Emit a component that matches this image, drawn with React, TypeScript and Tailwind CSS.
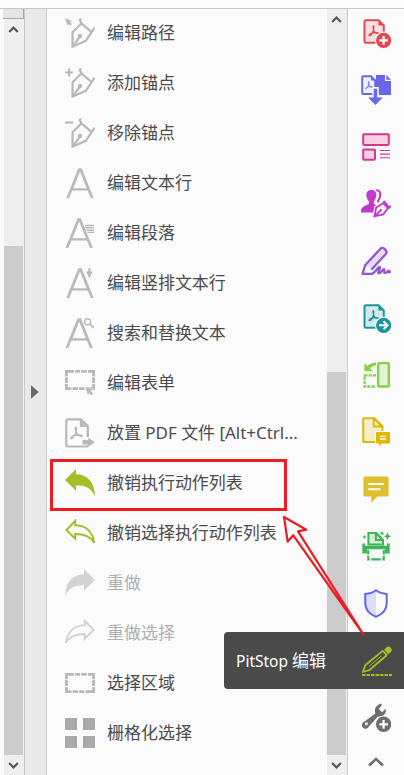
import type { ReactNode } from "react";

function Icon({ children, className = "" }: { children: ReactNode; className?: string }) {
  return (
    <svg viewBox="0 0 30 30" fill="none" className={`block h-[30px] w-[30px] shrink-0 ${className}`}>
      {children}
    </svg>
  );
}

const GRAY = "#b9b9b9";
const GREEN = "#a8bd25";

const Nib = () => (
  <g stroke={GRAY} strokeWidth="2.2">
    <path d="M16.3 5.4 7.6 14.3V28.6L20.8 22.8 26.6 14.2M15.8.3 14.9 2.3 16.4 5.3 26.6 14 29.6 9.6" />
    <path d="M7.6 28.6 15 18.5" />
    <circle cx="15" cy="18" r="1.1" fill={GRAY} />
  </g>
);

const LetterA = ({ dx = 0 }: { dx?: number }) => (
  <path
    d={`M${1.3 + dx} 29.9 ${13.4 + dx} .2H${16.6 + dx}L${28.7 + dx} 29.9H${25.9 + dx}L${22.6 + dx} 22.4H${7.3 + dx}L${4.1 + dx} 29.9ZM${8.3 + dx} 20.2H${21.7 + dx}L${15 + dx} 3.6Z`}
    fill={GRAY}
    fillRule="evenodd"
  />
);

const Acrobat = ({ c, x = 0, y = 0, s = 1 }: { c: string; x?: number; y?: number; s?: number }) => (
  <path
    transform={`translate(${x} ${y}) scale(${s})`}
    d="M5.3.3C6.1.3 6.2 2.8 5.5 5 4.6 7.8 2.6 10.9 1.3 10.6.5 10.2 1.5 8.8 3.8 8 6.5 7.2 10.6 7.2 11 8.1 11.1 8.9 9.1 8.9 7.2 7.2 5.3 5.4 4.7.8 5.3.3Z"
    stroke={c}
    strokeWidth="1.2"
  />
);

const Marquee = ({ y }: { y: number }) => (
  <g stroke={GRAY} strokeWidth="2.8">
    <path d={`M0 ${y + 1.4}H9M10.2 ${y + 1.4}H15M16.2 ${y + 1.4}H22M23 ${y + 1.4}H30M0 ${y + 18.6}H6.5M7.5 ${y + 18.6}H13M14 ${y + 18.6}H19.5M20.7 ${y + 18.6}H30`} />
    <path d={`M1.4 ${y}V${y + 6.3}M1.4 ${y + 7.2}V${y + 13}M1.4 ${y + 14}V${y + 20}M28.6 ${y}V${y + 6.3}M28.6 ${y + 7.2}V${y + 13}M28.6 ${y + 14}V${y + 20}`} />
  </g>
);

const UNDO = "M0 12 11 1V6.3C22 6.3 30 14 30 28.7 26.5 20 20.5 17.2 11 17.2V22.8Z";
const UNDO_LINE = "M1.4 12 10.2 3V7.3C20.5 7.3 27.5 13.5 29.2 24.8 25.5 18.5 20 16.1 10.2 16.1V20.6Z";

const rows: { label: string; off?: boolean; icon: ReactNode }[] = [
  { label: "编辑路径", icon: <><Nib /><path d="M0 .2 7 3 5.2 4.2 7 6.1 5.4 7.8 3.7 6 2.7 7.7Z" fill={GRAY} /></> },
  { label: "添加锚点", icon: <><Nib /><path d="M.2 4.5H8M4.1.6V8.4" stroke={GRAY} strokeWidth="2.2" /></> },
  { label: "移除锚点", icon: <><Nib /><path d="M0 4.5H8.3" stroke={GRAY} strokeWidth="2.2" /></> },
  { label: "编辑文本行", icon: <LetterA /> },
  { label: "编辑段落", icon: <><LetterA dx={-0.8} /><path d="M20 7.5H29M20.5 9.7H29M21.5 12.3H29M22.5 14.4H29" stroke={GRAY} strokeWidth="1.4" /></> },
  { label: "编辑竖排文本行", icon: <><LetterA /><path d="M23.2.3H25.5V3.5H27.7L24.4 10.5 21.1 3.5H23.2Z" fill={GRAY} /></> },
  { label: "搜索和替换文本", icon: <><LetterA dx={-0.8} /><circle cx="22.5" cy="3.8" r="3.1" fill="#fbfbfb" stroke={GRAY} strokeWidth="1.4" /><path d="M24.8 6 28.7 9.8" stroke={GRAY} strokeWidth="1.8" /></> },
  { label: "编辑表单", icon: <><Marquee y={2} /><path d="M20 18.5 28.5 21.3 26.2 22.9 28.3 25.8 26 27.7 24.2 25.2 22.8 27.2Z" fill={GRAY} stroke="#fbfbfb" strokeWidth=".5" /></> },
  { label: "放置 PDF 文件 [Alt+Ctrl...", icon: <><path d="M1.3 3Q1.3 1.3 3 1.3H16L22.8 8V19M22.8 27Q22.8 28.5 21 28.5H3Q1.3 28.5 1.3 27V3M16 1.5V8H22.5" stroke={GRAY} strokeWidth="2.2" /><path d="M16 2V8H22Z" fill={GRAY} /><Acrobat c={GRAY} x={4.5} y={8.5} s={1.15} /><path d="M17.5 22.1H23.2V19.8L30 24.3 23.2 28.8V26.5H17.5Z" fill={GRAY} /></> },
  { label: "撤销执行动作列表", icon: <path d={UNDO} fill={GREEN} /> },
  { label: "撤销选择执行动作列表", icon: <path d={UNDO_LINE} stroke={GREEN} strokeWidth="2" /> },
  { label: "重做", off: true, icon: <path transform="matrix(-1 0 0 1 30 0)" d={UNDO} fill="#d3d3d3" /> },
  { label: "重做选择", off: true, icon: <path transform="matrix(-1 0 0 1 30 0)" d={UNDO_LINE} stroke="#d3d3d3" strokeWidth="2" /> },
  { label: "选择区域", icon: <Marquee y={5} /> },
  { label: "栅格化选择", icon: <path d="M0 0H12V12H0ZM18 0H30V12H18ZM0 18H12V30H0ZM18 18H30V30H18Z" fill="#aaaaaa" /> },
];

const PdfPage = ({ c, tint }: { c: string; tint: string }) => (
  <>
    <path d="M4.8 2.3H17.6L22.8 7.4V23.5Q22.8 24.8 21.5 24.8H4.8Q3.5 24.8 3.5 23.5V3.6Q3.5 2.3 4.8 2.3Z" fill={tint} stroke={c} strokeWidth="2" />
    <path d="M17.5 2V7.5H23Z" fill={c} />
    <Acrobat c={c} x={7} y={7.3} s={0.98} />
    <circle cx="22.6" cy="22.3" r="8.7" fill="#fbfbfb" />
    <circle cx="22.6" cy="22.3" r="7.6" fill={c} />
  </>
);

const tools: ReactNode[] = [
  <><PdfPage c="#e34850" tint="#f9dfe1" /><path d="M18.3 22.3H27M22.6 18V26.7" stroke="#fff" strokeWidth="2.2" /></>,
  <><path d="M15 0H24V6H30V20H15ZM25.3 0 30 4.7H25.3Z" fill="#6767ec" /><path d="M2.4 1.2H10L14.2 5.3V19H2.4Q1.2 19 1.2 17.8V2.4Q1.2 1.2 2.4 1.2Z" fill="#f0f0fc" stroke="#6767ec" strokeWidth="1.9" /><path d="M10 1V5.5H14.5Z" fill="#6767ec" /><Acrobat c="#6767ec" x={3.7} y={6.2} s={0.72} /><path d="M11.3 12H17.8V21H23L14.5 30.5 5.8 21H11.3Z" fill="#fbfbfb" /><path d="M12.7 13.7H16.2V22.4H21.8L14.4 30 7 22.4H12.7Z" fill="#6767ec" /></>,
  <><rect x="2.2" y="2.2" width="25.6" height="10.7" rx=".8" fill="#f5d1e5" stroke="#d83790" strokeWidth="2" /><rect x="2.2" y="17.4" width="11.8" height="10.4" rx=".8" fill="#f5d1e5" stroke="#d83790" strokeWidth="2" /><path d="M19 18.5H29M19 22.1H29M19 25.7H29" stroke="#d83790" strokeWidth="1.1" /></>,
  <><path d="M10.4.9C14 .9 15.7 3.3 15.3 6.6 15.1 9 14 10.9 12.9 12.2V15L16.6 16.5 13 21.5V23.4H0C.1 18.8 1.5 17.6 7.9 15V12.2C6 10 5.3 8 5.3 5.7 5.3 2.7 7.3.9 10.4.9Z" fill="#c038cc" /><path d="M15.1 1.3C18.8 1 20 4 18.9 8.2 18.3 10 17.2 11 17.2 12V13.5" stroke="#c038cc" strokeWidth="2" /><path d="M13.4 27.4 15.2 18.6 22.2 14.2 27 19 22.2 25.5Z" fill="#fbfbfb" stroke="#fbfbfb" strokeWidth="4" /><path d="M13.4 27.4 15.2 18.6 22.2 14.2 27 19 22.2 25.5ZM22.2 14.2 23.4 11.8M23 12 28.4 18.7 30 16.8M14 27 20.3 20.6" fill="#fbfbfb" stroke="#c038cc" strokeWidth="1.8" /><circle cx="20" cy="21" r="1" fill="#c038cc" /></>,
  <><path d="M1.5 27.6 4.3 19 19.4 2.7Q21.4.9 23.8 3.1 26.7 5.8 24.8 8L10.4 23.4Z" fill="#e7dcf5" /><path d="M1.5 27.6 4.3 19 10.4 23.7Z" fill="#fbfbfb" /><path d="M10.4 23.7 24.8 8Q26.7 5.8 23.8 3.1 21.4.9 19.4 2.7L4.3 19 1.5 27.8H10.3C14.2 27.8 16.6 20.7 18.6 20.9 20.5 21.4 15.6 27.6 18 27.4 20.3 27.4 21.5 22.9 23 23.2 24.3 23.6 21.8 27.2 24.3 26.9 26.6 26.7 26.7 24.5 27.6 24.8 27.4 27.2 29 26.8 29.7 24.6" stroke="#9256d9" strokeWidth="2.3" strokeLinejoin="round" /></>,
  <><PdfPage c="#1b959a" tint="#d1e9e9" /><path d="M18 22.3H26M22.5 18.3 26.6 22.3 22.5 26.3" stroke="#fff" strokeWidth="2" /></>,
  <><rect x="17.2" y="3.2" width="10.6" height="23.3" rx=".8" fill="#e5f3d9" stroke="#85d044" strokeWidth="2.3" /><path d="M15 15.3H3.6V26.5H15" stroke="#85d044" strokeWidth="2.3" strokeDasharray="3.2 1" /><path d="M3.4 3.2V11.2H12L9.1 8.3Q11.5 5.6 15 5.2V2.6Q10 2.8 6.4 6.1Z" fill="#85d044" /></>,
  <><path d="M3 1.2H13.2L21.4 9.3V24.9H3Q2.2 24.9 2.2 24V2Q2.2 1.2 3 1.2Z" fill="#f5eece" stroke="#ddb900" strokeWidth="2" /><path d="M12.7 1.5V9.6H21.3M12.5.7 22 10.2" stroke="#ddb900" strokeWidth="2" /><path d="M14 14H29V28H14Z" fill="#fbfbfb" /><path d="M16 15H28Q29 15 29 16V25.5Q29 26.4 28 26.4H21L18.2 29.6V26.4H16Q15 26.4 15 25.5V16Q15 15 16 15Z" fill="#ddb900" /><path d="M19 19.4H25M19 22H25" stroke="#fff" strokeWidth="1.3" /></>,
  <><path d="M4 2.5H26Q27.6 2.5 27.6 4.1V21Q27.6 22.6 26 22.6H16.5L10.3 28.8V22.6H4Q2.4 22.6 2.4 21V4.1Q2.4 2.5 4 2.5Z" fill="#e0bf2c" /><path d="M7.3 10H22.7M7.3 15.2H19.5" stroke="#fff" strokeWidth="2" /></>,
  <><path d="M7.4 13.5V2H15L22 9V13.5Z" fill="#d7ecdb" stroke="#3fb458" strokeWidth="2" /><path d="M14.8 1V9H23M14 1.2 22.5 9.5" stroke="#3fb458" strokeWidth="2" /><path d="M1.3 12.5H4V14.8H26V12.5H28.7V22.5H23.8V18.3H6.2V22.5H1.3Z" fill="#3fb458" /><path d="M6.2 19H23.8V29.5H6.2Z" fill="#fbfbfb" /><path d="M7.2 19V23.5M22.8 19V23.5M7.2 24.7V27.6M22.8 24.7V27.6" stroke="#3fb458" strokeWidth="2" /><path d="M6.2 28.4H8.8M10.2 28.4H19.8M21.2 28.4H23.8" stroke="#3fb458" strokeWidth="2.4" /><path d="M26.5 1 27.5 4.1 30 5.3 27.5 6.5 26.5 9 25.4 6.5 23 5.3 25.4 4.1ZM21 0 21.8 1.5 23.5 2.2 21.8 2.9 21 4.5 20.2 2.9 18.5 2.2 20.2 1.5ZM3.5 4 4.2 5.3 5.5 6 4.2 6.7 3.5 8 2.8 6.7 1.5 6 2.8 5.3Z" fill="#3fb458" /></>,
  <><path d="M15 2.3V28.8C7 25 4.2 21.2 4.2 15V5.9Q10.5 5.7 15 2.3Z" fill="#dddcf8" /><path d="M15 2.3Q19.5 5.7 25.7 5.9V15C25.7 21.2 22.8 25.6 15 28.8 7.2 25.6 4.2 21.2 4.2 15V5.9Q10.5 5.7 15 2.3Z" stroke="#6767ec" strokeWidth="2" /></>,
  null,
  <><path d="M20.3 1.7C15.4 2.6 12.6 7.1 14.4 11.4L3.5 19.6A3.7 3.7 0 1 0 8.1 24.3L17 14.4C22 15.8 25.8 11.5 24.7 6.7L21.1 10.3 17.7 7 20.7 3.5Z" fill="#6e6e6e" /><circle cx="5.4" cy="21.8" r="1.5" fill="#fbfbfb" /><circle cx="22.6" cy="22.3" r="8.8" fill="#fbfbfb" /><circle cx="22.6" cy="22.3" r="7.7" fill="#6e6e6e" /><path d="M18.3 22.3H27M22.6 18V26.7" stroke="#fff" strokeWidth="2.2" /></>,
];

function Chevron({ down = false }: { down?: boolean }) {
  return (
    <svg viewBox="0 0 20 20" className="block h-5 w-5 shrink-0" fill="none" stroke="#555555" strokeWidth="2.2">
      <path d={down ? "M5.2 8 9.5 12.4 13.8 8" : "M5.2 13 9.5 8.6 13.8 13"} />
    </svg>
  );
}

export default function App() {
  return (
    <div className="relative flex h-[775px] w-[404px] flex-col overflow-hidden bg-[#fbfbfb] font-['Noto_Sans','Noto_Sans_CJK_SC',sans-serif] text-[#4c4c4c]">
      <div className="h-[9px] shrink-0 border-b border-[#c8c8c8]" />
      <div className="flex min-h-0 flex-1">
        <div className="flex w-[25px] shrink-0 flex-col border-r border-[#c8c8c8]">
          <div className="ml-[3px] h-[10px] w-[21px] border-r border-b border-[#a5a5a5] bg-[#e5e5e5]" />
          <div className="ml-1 flex flex-1 flex-col overflow-hidden bg-[#efefef]">
            <Chevron />
            <div className="h-[207px] shrink-0" />
            <div className="w-[19px] flex-1 bg-[#cccccc]" />
            <Chevron down />
          </div>
        </div>
        <div className="flex w-[22px] shrink-0 items-center border-r border-[#c8c8c8] bg-[#e9e9e9]">
          <svg viewBox="0 0 8 14" className="ml-1.5 h-[14px] w-2"><path d="M0 .3 7.7 7 0 13.7Z" fill="#696969" /></svg>
        </div>
        <main className="flex w-[280px] shrink-0 flex-col pt-[9px] pl-[18px]">
          {rows.map((r) => (
            <div key={r.label} className="mb-5 flex h-[30px] shrink-0 items-center gap-3">
              <Icon>{r.icon}</Icon>
              <span className={`text-[17px] leading-[30px] tracking-[-0.03px] whitespace-nowrap ${r.off ? "text-[#b0b0b0]" : ""}`}>{r.label}</span>
            </div>
          ))}
        </main>
        <div className="flex w-[21px] shrink-0 flex-col overflow-hidden border-r border-[#c8c8c8] bg-[#efefef]">
          <Chevron />
          <div className="h-[343px] shrink-0" />
          <div className="w-[19px] flex-1 bg-[#cccccc]" />
          <Chevron down />
        </div>
        <aside className="flex w-14 shrink-0 flex-col items-center gap-[27px] pt-[9px]">
          {tools.map((t, i) => <Icon key={i}>{t}</Icon>)}
          <svg viewBox="0 0 16 10" className="-mt-[2px] h-[10px] w-4 shrink-0" fill="none" stroke="#6e6e6e" strokeWidth="2.6">
            <path d="M1 8.5 8 2 15 8.5" />
          </svg>
        </aside>
      </div>
      <div className="absolute top-[459px] left-[50px] h-[52px] w-[237px] border-[3px] border-[#ed1c24]" />
      <div className="absolute top-[632px] left-[224px] flex h-[57px] w-[180px] items-center justify-between rounded-l bg-[#4a4a4a] pr-3 pl-3">
        <span className="text-[15.5px] whitespace-nowrap text-white">PitStop <span className="text-[17px]">编辑</span></span>
        <Icon>
          <path d="M1 26 3.2 19.2 20.7 4.9 24.7 9.2 7.2 24.2Z" stroke={GREEN} strokeWidth="1.8" strokeLinejoin="round" />
          <path d="M7 20.4 19.5 9.8" stroke={GREEN} strokeWidth="1" />
          <path d="M22 3.7 24.5 1.3Q26.7-.5 28.8 1.8 31 4.2 28.8 6.2L26.2 8.3Z" fill={GREEN} />
          <path d="M0 29H30" stroke={GREEN} strokeWidth="2" strokeDasharray="3.5 1" />
        </Icon>
      </div>
      <svg viewBox="0 0 84 124" className="pointer-events-none absolute top-[513px] left-[282px] h-[124px] w-[84px]" fill="none" stroke="#ed1c24" strokeWidth="2.2" strokeLinejoin="round">
        <path d="M81.5 121.5 16 18.4 24.3 16.7 2 4 5.7 28.6 11.3 22.3Z" />
      </svg>
    </div>
  );
}
